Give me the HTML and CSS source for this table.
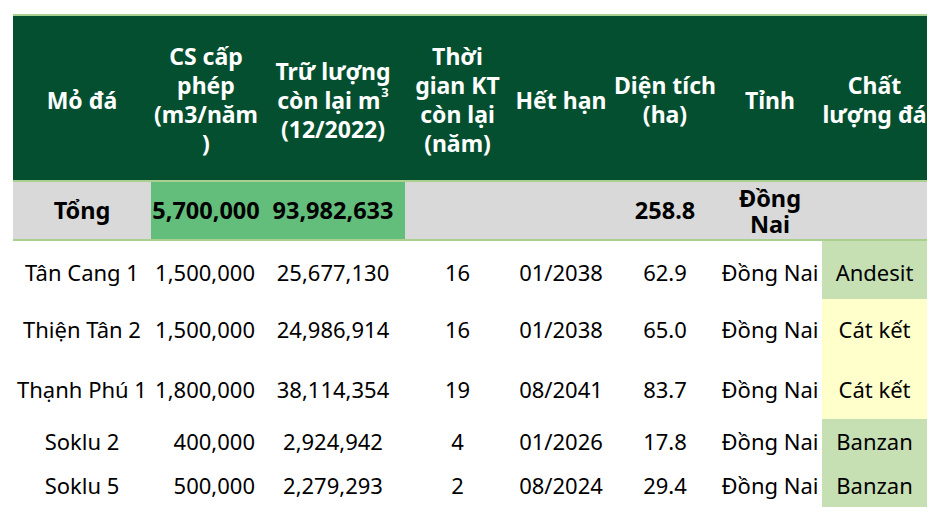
FILE: index.html
```html
<!DOCTYPE html>
<html lang="vi">
<head>
<meta charset="utf-8">
<title>Mỏ đá</title>
<link rel="stylesheet" href="styles.css">
</head>
<body>
<table class="sheet">
  <colgroup>
    <col class="c1"><col class="c2"><col class="c3"><col class="c4"><col class="c5"><col class="c6"><col class="c7"><col class="c8">
  </colgroup>
  <thead>
    <tr class="head">
      <th>Mỏ đá</th>
      <th>CS cấp<br>phép<br>(m3/năm<br>)</th>
      <th>Trữ lượng<br>còn lại m<sup>3</sup><br>(12/2022)</th>
      <th>Thời<br>gian KT<br>còn lại<br>(năm)</th>
      <th>Hết hạn</th>
      <th>Diện tích<br>(ha)</th>
      <th>Tỉnh</th>
      <th class="last">Chất<br>lượng đá</th>
    </tr>
  </thead>
  <tbody>
    <tr class="total">
      <td>Tổng</td>
      <td class="hl">5,700,000</td>
      <td class="hl">93,982,633</td>
      <td></td>
      <td></td>
      <td>258.8</td>
      <td class="prov">Đồng<br>Nai</td>
      <td></td>
    </tr>
    <tr class="tall first">
      <td>Tân Cang 1</td>
      <td class="num">1,500,000</td>
      <td>25,677,130</td>
      <td>16</td>
      <td>01/2038</td>
      <td>62.9</td>
      <td>Đồng Nai</td>
      <td class="q-green">Andesit</td>
    </tr>
    <tr class="tall">
      <td>Thiện Tân 2</td>
      <td class="num">1,500,000</td>
      <td>24,986,914</td>
      <td>16</td>
      <td>01/2038</td>
      <td>65.0</td>
      <td>Đồng Nai</td>
      <td class="q-yellow">Cát kết</td>
    </tr>
    <tr class="tall">
      <td>Thạnh Phú 1</td>
      <td class="num">1,800,000</td>
      <td>38,114,354</td>
      <td>19</td>
      <td>08/2041</td>
      <td>83.7</td>
      <td>Đồng Nai</td>
      <td class="q-yellow">Cát kết</td>
    </tr>
    <tr class="short">
      <td>Soklu 2</td>
      <td class="num">400,000</td>
      <td>2,924,942</td>
      <td>4</td>
      <td>01/2026</td>
      <td>17.8</td>
      <td>Đồng Nai</td>
      <td class="q-green">Banzan</td>
    </tr>
    <tr class="short">
      <td>Soklu 5</td>
      <td class="num">500,000</td>
      <td>2,279,293</td>
      <td>2</td>
      <td>08/2024</td>
      <td>29.4</td>
      <td>Đồng Nai</td>
      <td class="q-green">Banzan</td>
    </tr>
  </tbody>
</table>
</body>
</html>
```

FILE: styles.css
```css
html, body {
  margin: 0;
  padding: 0;
  background: #ffffff;
}

body {
  padding: 14px 0 0 13px;
  font-family: "Noto Sans", "Open Sans", "DejaVu Sans", sans-serif;
  color: #000000;
}

.sheet {
  border-collapse: collapse;
  table-layout: fixed;
  width: 914px;
  font-size: 22px;
}

.c1 { width: 138px; }
.c2 { width: 110px; }
.c3 { width: 144px; }
.c4 { width: 105px; }
.c5 { width: 102px; }
.c6 { width: 106px; }
.c7 { width: 104px; }
.c8 { width: 105px; }

.sheet th,
.sheet td {
  padding: 0;
  text-align: center;
  vertical-align: middle;
  white-space: nowrap;
}

.head {
  background: #034f2f;
  border-top: 2px solid #a9d08e;
  border-bottom: 2px solid #a9d08e;
}

.head th {
  height: 160px;
  padding-top: 4px;
  color: #ffffff;
  font-size: 23px;
  font-weight: 700;
  line-height: 29px;
}

.head sup {
  font-size: 13px;
  line-height: 0;
  vertical-align: 12px;
  margin-left: 1px;
}

.total {
  background: #d9d9d9;
  border-bottom: 2px solid #a9d08e;
}

.total td {
  height: 57px;
  font-size: 23.5px;
  font-weight: 700;
  line-height: 27px;
}

.total .prov {
  line-height: 26px;
}

.total .hl {
  background: #63be7b;
}

.tall td {
  height: 60px;
}

.first td {
  height: 54px;
  padding-top: 4px;
}

.short td {
  height: 44px;
}

.sheet .num {
  text-align: right;
  padding-right: 6px;
}

.q-green {
  background: #c6e0b4;
}

.q-yellow {
  background: #ffffcc;
}
```
